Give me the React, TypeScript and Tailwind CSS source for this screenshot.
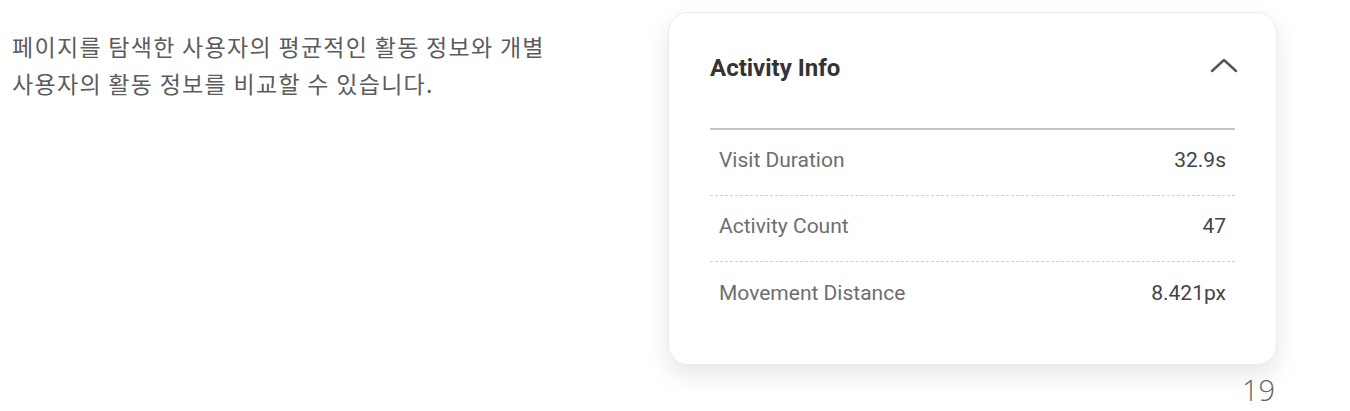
import React from "react";

const rows = [
  { label: "Visit Duration", value: "32.9s" },
  { label: "Activity Count", value: "47" },
  { label: "Movement Distance", value: "8.421px" },
];

export default function App() {
  return (
    <div className="w-[1350px] h-[411px] bg-white flex relative overflow-hidden">
      <div
        className="pl-[12px] pt-[28px] w-[668px] text-[23px] tracking-[1.3px] leading-[37px] text-[#5c5c5c]"
        style={{ fontFamily: '"Noto Sans CJK KR", "Noto Sans", sans-serif' }}
      >
        페이지를 탐색한 사용자의 평균적인 활동 정보와 개별
        <br />
        사용자의 활동 정보를 비교할 수 있습니다.
      </div>
      <div className="flex flex-col items-end pt-[12px]">
        <div
          className="w-[609px] h-[353px] rounded-[20px] border border-[#ececec] bg-white shadow-[0_10px_24px_rgba(0,0,0,0.10)] px-[41px] pt-[41px]"
          style={{ fontFamily: 'Roboto, "Liberation Sans", sans-serif' }}
        >
          <div className="flex items-center justify-between h-[28px]">
            <span className="text-[24px] font-bold text-[#333333] leading-[28px]">Activity Info</span>
            <svg width="28" height="16" viewBox="0 0 28 16" className="mr-[-3px] mt-[-6px]">
              <path d="M2 14 L14 3 L26 14" fill="none" stroke="#555555" strokeWidth="2.4" strokeLinecap="round" strokeLinejoin="round" />
            </svg>
          </div>
          <div className="mt-[46px] border-t-2 border-[#c4c4c4]">
            {rows.map((r, i) => (
              <div
                key={r.label}
                className={
                  "flex items-center justify-between h-[66px] px-[9px] pb-[3px] text-[21px] " +
                  (i < rows.length - 1 ? "border-b border-dashed border-[#cfcfcf]" : "")
                }
              >
                <span className="text-[#6e6e6e]">{r.label}</span>
                <span className="text-[#444444]">{r.value}</span>
              </div>
            ))}
          </div>
        </div>
        <div
          className="mt-[8px] mr-[2px] text-[29px] font-light leading-[34px] text-[#666666]"
          style={{ fontFamily: '"Open Sans", sans-serif' }}
        >
          19
        </div>
      </div>
    </div>
  );
}
